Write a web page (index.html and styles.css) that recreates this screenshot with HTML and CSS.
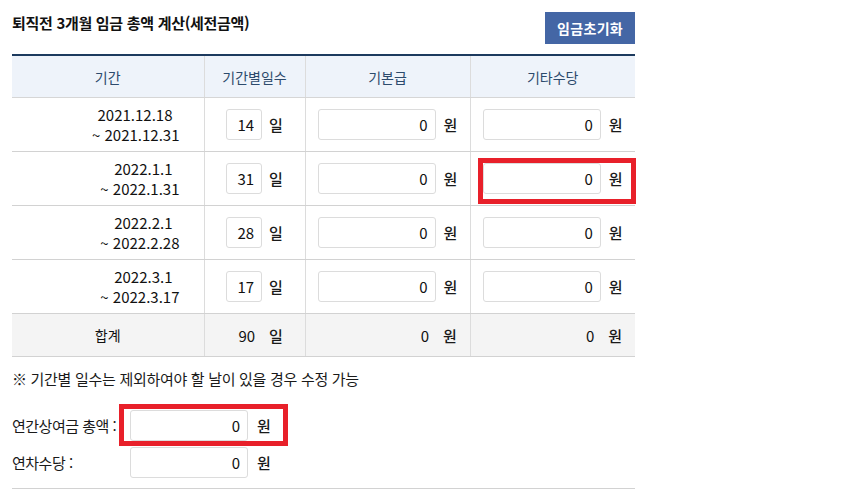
FILE: index.html
```html
<!DOCTYPE html>
<html lang="ko">
<head>
<meta charset="utf-8">
<title>퇴직전 3개월 임금 총액 계산</title>
<link rel="stylesheet" href="styles.css">
</head>
<body>
<div class="page">
  <div class="top">
    <h2 class="title">퇴직전 3개월 임금 총액 계산(세전금액)</h2>
    <button class="reset" type="button">임금초기화</button>
  </div>
  <table class="calc">
    <colgroup>
      <col class="c-period"><col class="c-days"><col class="c-amt"><col class="c-amt">
    </colgroup>
    <thead>
      <tr><th>기간</th><th>기간별일수</th><th>기본급</th><th>기타수당</th></tr>
    </thead>
    <tbody>
      <tr>
        <td class="period"><span class="from">2021.12.18</span><span class="to">~ 2021.12.31</span></td>
        <td><span class="field"><input class="days" value="14"><span class="unit">일</span></span></td>
        <td><span class="field"><input class="amt" value="0"><span class="unit">원</span></span></td>
        <td><span class="field"><input class="amt" value="0"><span class="unit">원</span></span></td>
      </tr>
      <tr>
        <td class="period"><span class="from">2022.1.1</span><span class="to">~ 2022.1.31</span></td>
        <td><span class="field"><input class="days" value="31"><span class="unit">일</span></span></td>
        <td><span class="field"><input class="amt" value="0"><span class="unit">원</span></span></td>
        <td class="marked"><span class="field"><input class="amt" value="0"><span class="unit">원</span></span><span class="hl hl-cell"></span></td>
      </tr>
      <tr>
        <td class="period"><span class="from">2022.2.1</span><span class="to">~ 2022.2.28</span></td>
        <td><span class="field"><input class="days" value="28"><span class="unit">일</span></span></td>
        <td><span class="field"><input class="amt" value="0"><span class="unit">원</span></span></td>
        <td><span class="field"><input class="amt" value="0"><span class="unit">원</span></span></td>
      </tr>
      <tr>
        <td class="period"><span class="from">2022.3.1</span><span class="to">~ 2022.3.17</span></td>
        <td><span class="field"><input class="days" value="17"><span class="unit">일</span></span></td>
        <td><span class="field"><input class="amt" value="0"><span class="unit">원</span></span></td>
        <td><span class="field"><input class="amt" value="0"><span class="unit">원</span></span></td>
      </tr>
    </tbody>
    <tfoot>
      <tr>
        <td class="sum-label">합계</td>
        <td><span class="field"><span class="sum days-w">90</span><span class="unit">일</span></span></td>
        <td><span class="field"><span class="sum amt-w">0</span><span class="unit">원</span></span></td>
        <td><span class="field"><span class="sum amt-w">0</span><span class="unit">원</span></span></td>
      </tr>
    </tfoot>
  </table>
  <p class="note">※ 기간별 일수는 제외하여야 할 날이 있을 경우 수정 가능</p>
  <div class="extra">
    <div class="line">
      <span class="label">연간상여금 총액 :</span>
      <span class="field marked-field"><input class="amt" value="0"><span class="unit">원</span><span class="hl hl-field"></span></span>
    </div>
    <div class="line">
      <span class="label">연차수당 :</span>
      <span class="field"><input class="amt" value="0"><span class="unit">원</span></span>
    </div>
  </div>
</div>
</body>
</html>
```

FILE: styles.css
```css
body {
  margin: 0;
  background: #fff;
  color: #222;
  font-family: "Noto Sans CJK KR", "Noto Sans", sans-serif;
}

.page {
  width: 623px;
  padding: 12px;
}

.top {
  display: flex;
  justify-content: space-between;
  align-items: flex-start;
  height: 42px;
}

.title {
  margin: 0;
  font-size: 15px;
  font-weight: 700;
  line-height: 22px;
  color: #111;
  letter-spacing: -0.3px;
}

.reset {
  height: 32px;
  padding: 0 12px;
  border: 0;
  background: #4466a5;
  color: #fff;
  font-family: "Noto Sans CJK KR", sans-serif;
  font-size: 14px;
  font-weight: 700;
  line-height: 32px;
  letter-spacing: 0.3px;
}

.calc {
  width: 623px;
  border-collapse: collapse;
  table-layout: fixed;
}

.c-period { width: 192px; }
.c-days { width: 101px; }
.c-amt { width: 165px; }

.calc th {
  height: 41px;
  padding: 0;
  background: #eef3fa;
  border-top: 2px solid #1c3a5e;
  border-bottom: 1px solid #d6d6d6;
  border-left: 1px solid #dcdcdc;
  color: #2c4a6c;
  font-size: 14px;
  font-weight: 400;
  line-height: 20px;
}

.calc td {
  height: 53px;
  padding: 0;
  border-bottom: 1px solid #d2d2d2;
  border-left: 1px solid #dcdcdc;
  text-align: center;
  font-size: 15px;
  font-weight: 400;
  line-height: 20px;
  color: #111;
}

.calc th:first-child,
.calc td:first-child {
  border-left: 0;
}

.calc tfoot td {
  height: 42px;
  background: #f4f4f4;
  border-top: 1px solid #1f3d63;
  border-bottom: 1px solid #d2d2d2;
}

.period {
  text-align: right !important;
  padding-right: 24px !important;
}

.period span {
  display: block;
}

.period .from {
  margin-right: 7px;
}

.sum-label {
  font-size: 14px !important;
}

.field {
  display: inline-flex;
  align-items: center;
  gap: 7px;
  vertical-align: middle;
}

.field .unit {
  font-size: 15px;
  font-weight: 500;
  color: #1a1a1a;
}

input {
  box-sizing: border-box;
  height: 31px;
  margin: 0;
  padding: 0 7px 0 0;
  border: 1px solid #dcdcdc;
  border-radius: 3px;
  background: #fff;
  text-align: right;
  font-family: "Noto Sans CJK KR", sans-serif;
  font-size: 15px;
  font-weight: 400;
  color: #111;
}

input.days { width: 36px; }
input.amt { width: 118px; }

.amt + .unit { margin-left: 1px; }

.sum {
  box-sizing: border-box;
  padding-right: 7px;
  text-align: right;
  font-size: 15px;
}

.days-w { width: 36px; }
.amt-w { width: 118px; }

.marked {
  position: relative;
}

.hl {
  position: absolute;
  box-sizing: border-box;
  border: 5px solid #e8202a;
  pointer-events: none;
}

.hl-cell {
  top: 6px;
  left: 7px;
  right: -1px;
  bottom: 1px;
}

.note {
  margin: 0;
  padding-top: 12px;
  font-size: 15px;
  font-weight: 400;
  line-height: 20px;
  color: #1a1a1a;
  letter-spacing: -0.3px;
}

.extra {
  display: flex;
  flex-direction: column;
  gap: 6px;
  padding-top: 21px;
  padding-bottom: 10px;
  border-bottom: 1px solid #d2d2d2;
}

.line {
  display: flex;
  align-items: center;
}

.label {
  width: 118px;
  font-size: 15px;
  font-weight: 400;
  line-height: 20px;
  color: #1a1a1a;
  letter-spacing: -0.5px;
}

.line .field {
  gap: 8px;
}

.marked-field {
  position: relative;
}

.hl-field {
  top: -6px;
  left: -11px;
  width: 169px;
  height: 42px;
}
```
